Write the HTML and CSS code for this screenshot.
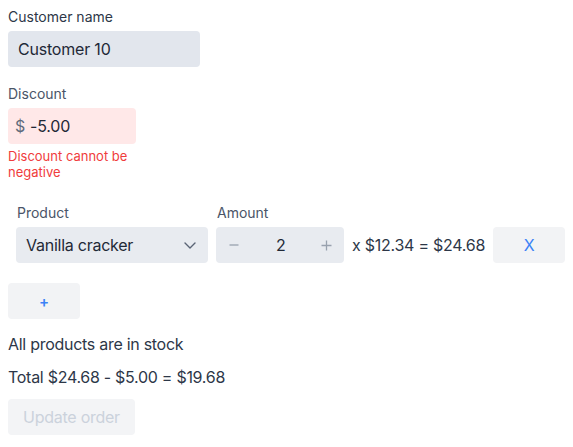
FILE: index.html
```html
<!DOCTYPE html>
<html>
<head>
<meta charset="utf-8">
<link rel="stylesheet" href="styles.css">
</head>
<body>
<div class="form">
  <div class="field">
    <label class="label label-dark">Customer name</label>
    <div class="input input-name">Customer 10</div>
  </div>
  <div class="field field-discount">
    <label class="label">Discount</label>
    <div class="input input-discount"><span class="prefix">$</span><span>-5.00</span></div>
    <div class="error">Discount cannot be negative</div>
  </div>
  <div class="line-row">
    <div class="col">
      <label class="label">Product</label>
      <div class="select">
        <span>Vanilla cracker</span>
        <svg class="chev" width="12" height="7" viewBox="0 0 12 7"><path d="M1 1l5 5 5-5" fill="none" stroke="#5a6475" stroke-width="1.4" stroke-linecap="round" stroke-linejoin="round"/></svg>
      </div>
    </div>
    <div class="col">
      <label class="label">Amount</label>
      <div class="stepper">
        <svg class="step" width="10" height="10" viewBox="0 0 10 10"><path d="M0.5 5h9" stroke="#98a1ae" stroke-width="1.3"/></svg>
        <span class="qty">2</span>
        <svg class="step" width="11" height="11" viewBox="0 0 11 11"><path d="M0.5 5.5h10M5.5 0.5v10" stroke="#98a1ae" stroke-width="1.3"/></svg>
      </div>
    </div>
    <div class="calc">x $12.34 = $24.68</div>
    <button class="btn btn-remove">X</button>
  </div>
  <button class="btn btn-add">+</button>
  <p class="text">All products are in stock</p>
  <p class="text">Total $24.68 - $5.00 = $19.68</p>
  <button class="btn btn-update">Update order</button>
</div>
</body>
</html>
```

FILE: styles.css
```css
html, body {
  margin: 0;
  padding: 0;
  background: #ffffff;
}
body {
  font-family: Inter, "Noto Sans", sans-serif;
  color: #2d3748;
  padding: 7px 8px;
}
.form {
  display: flex;
  flex-direction: column;
  align-items: flex-start;
}
.field {
  display: flex;
  flex-direction: column;
  gap: 4px;
  margin-bottom: 17px;
}
.field-discount {
  width: 128px;
  margin-bottom: 23px;
}
.label {
  font-size: 14px;
  line-height: 20px;
  color: #4a5568;
}
.label-dark {
  color: #2d3748;
}
.input {
  height: 36px;
  box-sizing: border-box;
  border-radius: 4px;
  display: flex;
  align-items: center;
  font-size: 16px;
  letter-spacing: -0.2px;
  color: #1f2937;
}
.input-name {
  width: 192px;
  background: #e2e6ed;
  padding-left: 10px;
}
.input-discount {
  width: 128px;
  background: #ffe8e8;
  padding-left: 7px;
}
.prefix {
  color: #5f6b7c;
  margin-right: 5px;
}
.error {
  font-size: 13px;
  line-height: 16px;
  color: #f03c3c;
}
.line-row {
  display: flex;
  align-items: flex-end;
  gap: 8px;
  padding: 0 8px;
}
.col {
  display: flex;
  flex-direction: column;
  gap: 4px;
}
.col .label {
  padding-left: 1px;
}
.select {
  width: 192px;
  height: 36px;
  box-sizing: border-box;
  background: #e8ebf0;
  border-radius: 4px;
  display: flex;
  align-items: center;
  justify-content: space-between;
  padding: 0 12px 0 10px;
  font-size: 16px;
  letter-spacing: -0.25px;
  color: #1f2937;
}
.chev {
  display: block;
}
.stepper {
  width: 128px;
  height: 36px;
  box-sizing: border-box;
  background: #e8ebf0;
  border-radius: 4px;
  display: flex;
  align-items: center;
  justify-content: space-between;
  padding: 0 12px 0 13px;
  font-size: 16px;
  color: #1f2937;
}
.step {
  display: block;
}
.qty {
  padding-left: 2px;
}
.calc {
  height: 36px;
  display: flex;
  align-items: center;
  white-space: nowrap;
  font-size: 16px;
  letter-spacing: -0.25px;
  color: #2d3748;
}
.btn {
  font-family: inherit;
  border: none;
  border-radius: 4px;
  height: 36px;
  padding: 0;
  cursor: pointer;
}
.btn-remove {
  width: 72px;
  background: #f2f3f5;
  color: #3b82f6;
  font-size: 16px;
}
.btn-add {
  width: 72px;
  background: #f2f3f5;
  color: #3b82f6;
  font-size: 15px;
  font-weight: 600;
  margin-top: 20px;
}
.text {
  margin: 0;
  font-size: 16px;
  line-height: 24px;
  letter-spacing: -0.28px;
}
.btn-add + .text {
  margin-top: 13px;
  margin-bottom: 9px;
}
.btn-update {
  margin-top: 10px;
  padding: 0 15px;
  background: #f3f4f6;
  color: #cbd2dc;
  font-size: 16px;
  letter-spacing: -0.25px;
}
```
